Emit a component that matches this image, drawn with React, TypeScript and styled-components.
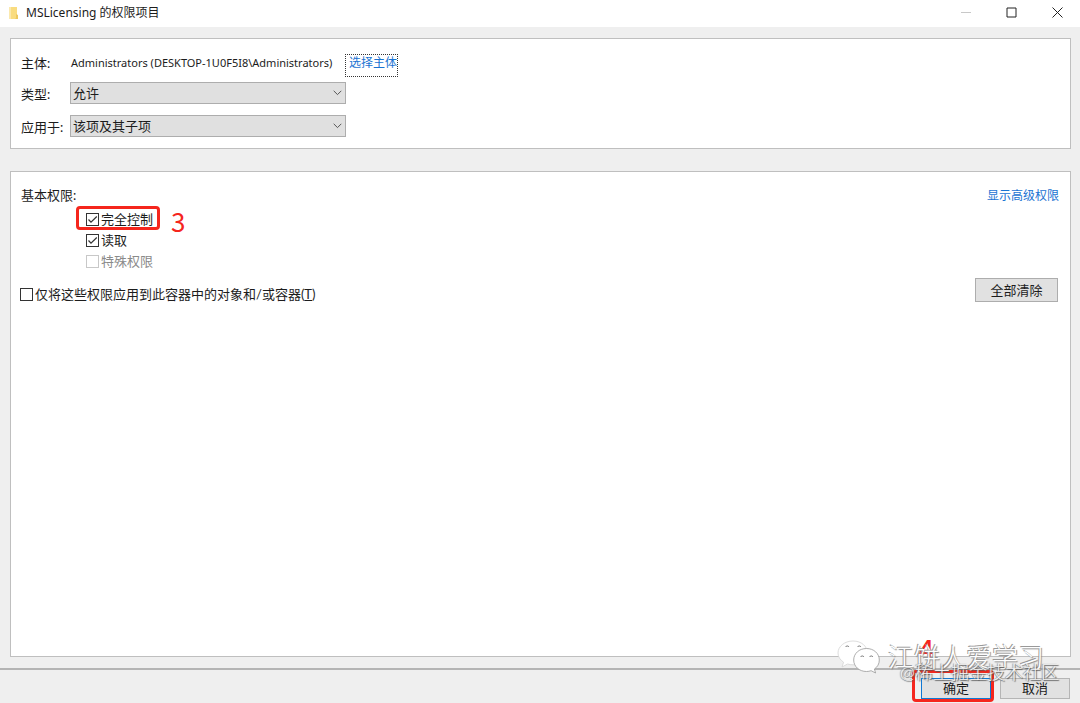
import React from "react";
import styled, { createGlobalStyle } from "styled-components";

const GlobalStyle = createGlobalStyle`
  *, *::before, *::after { box-sizing: border-box; }
  body {
    margin: 0;
    background: #efefef;
    color: #1c1c1c;
    font: 13px/20px Lato, "Noto Sans CJK SC", sans-serif;
  }
`;

const Dialog = styled.div`
  display: flex;
  flex-direction: column;
  min-height: 100vh;
`;

const TitleBar = styled.header`
  display: flex;
  align-items: center;
  height: 27px;
  padding-left: 8px;
  background: #fff;
`;

const Title = styled.h1`
  flex: 1;
  margin: 0 0 0 7px;
  padding-bottom: 2px;
  font-family: "Noto Sans", "Noto Sans CJK SC", sans-serif;
  font-size: 12px;
  font-weight: 400;
`;

const WindowButton = styled.button`
  display: flex;
  align-items: center;
  justify-content: center;
  width: 46px;
  height: 24px;
  margin: 0 0 3px;
  padding: 0;
  border: 0;
  background: none;
  color: #222;
  &:disabled { color: #c8c8c8; }
`;

const Main = styled.main`
  flex: 1;
  display: flex;
  flex-direction: column;
  gap: 22px;
  padding: 11px 9px 11px 10px;
`;

const Panel = styled.section<{ $grow?: boolean }>`
  flex: ${(p) => (p.$grow ? 1 : "none")};
  padding: 12px 11px 11px 10px;
  border: 1px solid #bfbfbf;
  background: #fff;
`;

const PrincipalRow = styled.div`
  display: flex;
  height: 24px;
  margin-bottom: 7px;
  line-height: 24px;
`;

const FieldRow = styled.div`
  display: flex;
  align-items: flex-end;
  height: 22px;
  & + & { margin-top: 11px; }
`;

const FieldName = styled.label`
  flex: none;
  width: 49px;
`;

const Principal = styled.span`
  min-width: 264px;
  margin-left: 1px;
  font-family: "Noto Sans", sans-serif;
  font-size: 11px;
`;

const Link = styled.a<{ $focused?: boolean }>`
  color: #1a73d2;
  font-size: 12px;
  text-decoration: none;
  ${(p) =>
    p.$focused &&
    `
    height: 23px;
    margin: 3px 0 0 10px;
    padding-left: 3px;
    border: 1px dotted #333;
    line-height: 16px;
  `}
`;

const SelectBox = styled.div`
  position: relative;
  width: 276px;
  height: 22px;
  svg {
    position: absolute;
    top: 8px;
    right: 4px;
    pointer-events: none;
  }
`;

const Select = styled.select`
  appearance: none;
  display: block;
  width: 100%;
  height: 100%;
  padding: 0 20px 0 2px;
  border: 1px solid #adadad;
  border-radius: 0;
  background: #e0e0e0;
  color: inherit;
  font: inherit;
`;

const PanelHead = styled.div`
  display: flex;
  align-items: center;
  justify-content: space-between;
  height: 24px;
`;

const GroupName = styled.h2`
  margin: 0;
  padding-bottom: 2px;
  font-size: 13px;
  font-weight: 400;
`;

const Permissions = styled.div`
  position: relative;
  padding: 1px 0 2px 65px;
`;

const CheckLabel = styled.label<{ $disabled?: boolean }>`
  display: flex;
  align-items: center;
  gap: 2px;
  width: max-content;
  height: 21px;
  color: ${(p) => (p.$disabled ? "#8a8a8a" : "inherit")};
`;

const CheckText = styled.span`
  padding-bottom: 2px;
`;

const CheckBoxFrame = styled.span`
  position: relative;
  width: 13px;
  height: 13px;
  svg {
    position: absolute;
    inset: 0;
    visibility: hidden;
    pointer-events: none;
  }
  input:checked + svg { visibility: visible; }
`;

const CheckInput = styled.input`
  appearance: none;
  display: block;
  width: 13px;
  height: 13px;
  margin: 0;
  border: 1px solid #333;
  background: #fff;
  &:disabled { border-color: #c8c8c8; }
`;

const ScopeRow = styled.div`
  display: flex;
  align-items: center;
  justify-content: space-between;
  margin-left: -1px;
`;

const ScopeLabel = styled(CheckLabel)`
  margin-top: 10px;
`;

const Button = styled.button<{ $primary?: boolean }>`
  width: 70px;
  height: 21px;
  padding: 0 0 1px;
  border: 1px solid ${(p) => (p.$primary ? "#0f78d4" : "#b5b5b5")};
  background: #e1e1e1;
  color: inherit;
  font: inherit;
  line-height: 18px;
`;

const ClearButton = styled(Button)`
  width: 83px;
  height: 24px;
  margin-right: 1px;
  padding: 0;
  border-color: #adadad;
  line-height: 22px;
`;

const Footer = styled.footer`
  position: relative;
  display: flex;
  justify-content: flex-end;
  gap: 9px;
  height: 35px;
  padding: 8px 10px 0;
  border-top: 2px solid #b4b4b4;
`;

const Confirm = styled.div`
  position: relative;
  height: 21px;
`;

const Frame = styled.span`
  position: absolute;
  border: 3px solid #f5261d;
  border-radius: 4px;
  pointer-events: none;
`;

const FullControlFrame = styled(Frame)`
  top: -2px;
  left: 55px;
  width: 84px;
  height: 24px;
`;

const ConfirmFrame = styled(Frame)`
  top: -8px;
  left: -9px;
  width: 82px;
  height: 32px;
`;

const Step = styled.span`
  position: absolute;
  color: #f5261d;
  font-family: "Noto Sans CJK SC", sans-serif;
  font-size: 26px;
  line-height: 28px;
`;

const StepThree = styled(Step)`
  top: -1px;
  left: 150px;
`;

const StepFour = styled(Step)`
  top: -44px;
  left: -2px;
  font-weight: 500;
`;

const Watermark = styled.div`
  position: absolute;
  right: 36px;
  bottom: 28px;
  display: flex;
  align-items: center;
  gap: 8px;
  color: #fff;
  font-size: 26px;
  font-weight: 300;
  line-height: 36px;
  text-shadow: -1px -1px 0 #999, 1px 1px 1px #888;
  white-space: nowrap;
  pointer-events: none;
`;

const Credit = styled.div`
  position: absolute;
  right: 21px;
  bottom: 19px;
  color: #f4f4f4;
  font-size: 18px;
  font-weight: 300;
  line-height: 24px;
  text-shadow: 1px 1px 1px #555, -1px 0 1px #888;
  white-space: nowrap;
  pointer-events: none;
`;

function FolderIcon() {
  return (
    <svg width="11" height="14" viewBox="0 0 11 14" aria-hidden="true">
      <path d="M1 0h8v12H1z" fill="#f9dc80" />
      <path d="M1 0h2v12H1z" fill="#fbe9ae" />
      <path d="M8 7l2 1v4H7l1-1z" fill="#edc860" />
    </svg>
  );
}

function Chevron() {
  return (
    <svg width="9" height="6" viewBox="0 0 9 6" fill="none" stroke="#555" aria-hidden="true">
      <path d="M.7 .8 4.5 4.6 8.3 .8" />
    </svg>
  );
}

function WeChatIcon() {
  return (
    <svg width="43" height="34" viewBox="0 0 43 34" aria-hidden="true">
      <g fill="#fff" stroke="#999" strokeWidth="0.8">
        <path d="M16 1C7.500 1 1 6.500 1 13c0 4 2.300 7 5.600 9.200L5 27l5.500-3c2 .6 3.700.8 5.500.8 8.500 0 14.500-5.300 14.500-11.800S24.500 1 16 1z" stroke="#d4d4d4" />
        <path d="M29.500 8.500c-7.300 0-12.800 5-12.800 11.500s5.500 11.500 12.800 11.500c1.600 0 3.200-.3 4.600-.8l4.500 2.300-1.200-4c3-2 4.900-5 4.900-9 0-6.500-5.500-11.500-12.800-11.500z" />
      </g>
      <g fill="none" stroke="#777">
        <path d="M8.500 7a2 2 0 0 1 3.500 0M20.500 7a2 2 0 0 1 3.500 0M23.500 17a2 2 0 0 1 3.500 0M32.500 17a2 2 0 0 1 3.500 0" />
      </g>
    </svg>
  );
}

function CheckBox({ id, checked, disabled }: { id: string; checked?: boolean; disabled?: boolean }) {
  return (
    <CheckBoxFrame>
      <CheckInput type="checkbox" id={id} defaultChecked={checked} disabled={disabled} />
      <svg width="13" height="13" viewBox="0 0 13 13" fill="none" stroke="#333" strokeWidth="1.2" aria-hidden="true">
        <path d="M2.500 6.500 5 9.200 10.800 3.500" />
      </svg>
    </CheckBoxFrame>
  );
}

const permissions = [
  { id: "full", name: "完全控制", checked: true },
  { id: "read", name: "读取", checked: true },
  { id: "special", name: "特殊权限", disabled: true },
];

const fields = [
  { id: "type", name: "类型:", value: "允许" },
  { id: "applies", name: "应用于:", value: "该项及其子项" },
];

export default function App() {
  return (
    <Dialog>
      <GlobalStyle />
      <TitleBar>
        <FolderIcon />
        <Title>MSLicensing 的权限项目</Title>
        <WindowButton aria-label="最小化" disabled>
          <svg width="11" height="11" stroke="currentColor"><path d="M1 5.500h10" /></svg>
        </WindowButton>
        <WindowButton aria-label="最大化">
          <svg width="11" height="11" fill="none" stroke="currentColor"><path d="M1 1h9v9H1z" /></svg>
        </WindowButton>
        <WindowButton aria-label="关闭">
          <svg width="11" height="11" stroke="currentColor"><path d="M.5 .5l10 10M10.500 .5l-10 10" /></svg>
        </WindowButton>
      </TitleBar>

      <Main>
        <Panel>
          <PrincipalRow>
            <FieldName as="span">主体:</FieldName>
            <Principal>Administrators (DESKTOP-1U0F5I8\Administrators)</Principal>
            <Link href="#principal" $focused>选择主体</Link>
          </PrincipalRow>
          {fields.map((f) => (
            <FieldRow key={f.id}>
              <FieldName htmlFor={f.id}>{f.name}</FieldName>
              <SelectBox>
                <Select id={f.id}>
                  <option>{f.value}</option>
                </Select>
                <Chevron />
              </SelectBox>
            </FieldRow>
          ))}
        </Panel>

        <Panel $grow>
          <PanelHead>
            <GroupName>基本权限:</GroupName>
            <Link href="#advanced">显示高级权限</Link>
          </PanelHead>
          <Permissions>
            {permissions.map((p) => (
              <CheckLabel key={p.id} htmlFor={p.id} $disabled={p.disabled}>
                <CheckBox id={p.id} checked={p.checked} disabled={p.disabled} />
                <CheckText>{p.name}</CheckText>
              </CheckLabel>
            ))}
            <FullControlFrame />
            <StepThree>3</StepThree>
          </Permissions>
          <ScopeRow>
            <ScopeLabel htmlFor="scope">
              <CheckBox id="scope" />
              <CheckText>仅将这些权限应用到此容器中的对象和/或容器(<u>T</u>)</CheckText>
            </ScopeLabel>
            <ClearButton type="button">全部清除</ClearButton>
          </ScopeRow>
        </Panel>
      </Main>

      <Footer>
        <Confirm>
          <Button type="button" $primary>确定</Button>
          <ConfirmFrame />
          <StepFour>4</StepFour>
        </Confirm>
        <Button type="button">取消</Button>
        <Watermark>
          <WeChatIcon />
          江饼人爱学习
        </Watermark>
        <Credit>@稀土掘金技术社区</Credit>
      </Footer>
    </Dialog>
  );
}
